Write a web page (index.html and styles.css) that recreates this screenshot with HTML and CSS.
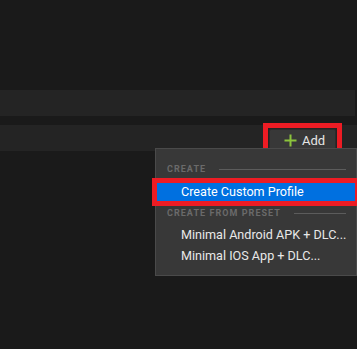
FILE: index.html
```html
<!DOCTYPE html>
<html>
<head>
<meta charset="utf-8">
<link rel="stylesheet" href="styles.css">
</head>
<body>
<div class="page">
  <div class="band band-top"></div>
  <div class="band band-toolbar">
    <div class="highlight">
      <button class="add-btn">
        <svg class="plus" width="13" height="13" viewBox="0 0 13 13"><path d="M6.5 0.5v12M0.5 6.5h12" stroke="#8cc43c" stroke-width="2" fill="none"/></svg>
        <span>Add</span>
      </button>
    </div>
  </div>
  <div class="menu">
    <div class="menu-header"><span>CREATE</span><i class="rule"></i></div>
    <div class="menu-item selected">Create Custom Profile</div>
    <div class="menu-header h2"><span>CREATE FROM PRESET</span><i class="rule"></i></div>
    <div class="menu-item">Minimal Android APK + DLC...</div>
    <div class="menu-item gap">Minimal IOS App + DLC...</div>
  </div>
</div>
</body>
</html>
```
FILE: styles.css
```css
html, body {
  margin: 0;
  padding: 0;
  background: #1a1a1a;
}
.page {
  position: relative;
  width: 357px;
  height: 349px;
  overflow: hidden;
  padding-top: 90px;
  box-sizing: border-box;
  font-family: Roboto, "Noto Sans", sans-serif;
}
.band {
  background: #242424;
}
.band-top {
  height: 26px;
  margin-right: 2px;
}
.band-toolbar {
  margin-top: 9px;
  height: 26px;
  display: flex;
  justify-content: flex-end;
  align-items: center;
}
.highlight {
  margin-right: 15px;
  border: 5px solid #ed1c24;
  padding: 1px;
  margin-top: 2px;
  margin-bottom: -2px;
}
.add-btn {
  display: flex;
  margin: 0;
  height: 22px;
  width: 67px;
  box-sizing: border-box;
  background: #383838;
  border: 1px solid #2c2c2c;
  border-radius: 2px;
  align-items: center;
  padding: 0 0 0 14px;
  gap: 5px;
  color: #e6e6e6;
  font-family: Roboto, sans-serif;
  font-size: 13px;
}
.plus { display: block; flex: none; }
.menu {
  position: absolute;
  left: 155px;
  top: 148px;
  width: 202px;
  box-sizing: border-box;
  background: #383838;
  border: 1px solid #4a4a4a;
  padding: 12px 0 10px;
}
.menu-header {
  height: 16px;
  display: flex;
  align-items: center;
  padding: 0 10px 0 11px;
  gap: 13px;
  font-size: 9px;
  font-weight: bold;
  letter-spacing: 1.05px;
  color: #6a6a6a;
  margin-bottom: 6px;
}
.menu-header.h2 { margin-bottom: 5px; margin-top: 4px; }
.rule {
  flex: 1;
  height: 1px;
  background: #5c5c5c;
}
.menu-item {
  height: 18px;
  line-height: 18px;
  margin: 0 1px;
  padding-left: 24px;
  font-size: 12.6px;
  color: #e8e8e8;
  white-space: nowrap;
}
.menu-item.gap { margin-top: 3px; }
.menu-item.selected {
  background: #0070e0;
  color: #ffffff;
  outline: 5px solid #ed1c24;
}
```
